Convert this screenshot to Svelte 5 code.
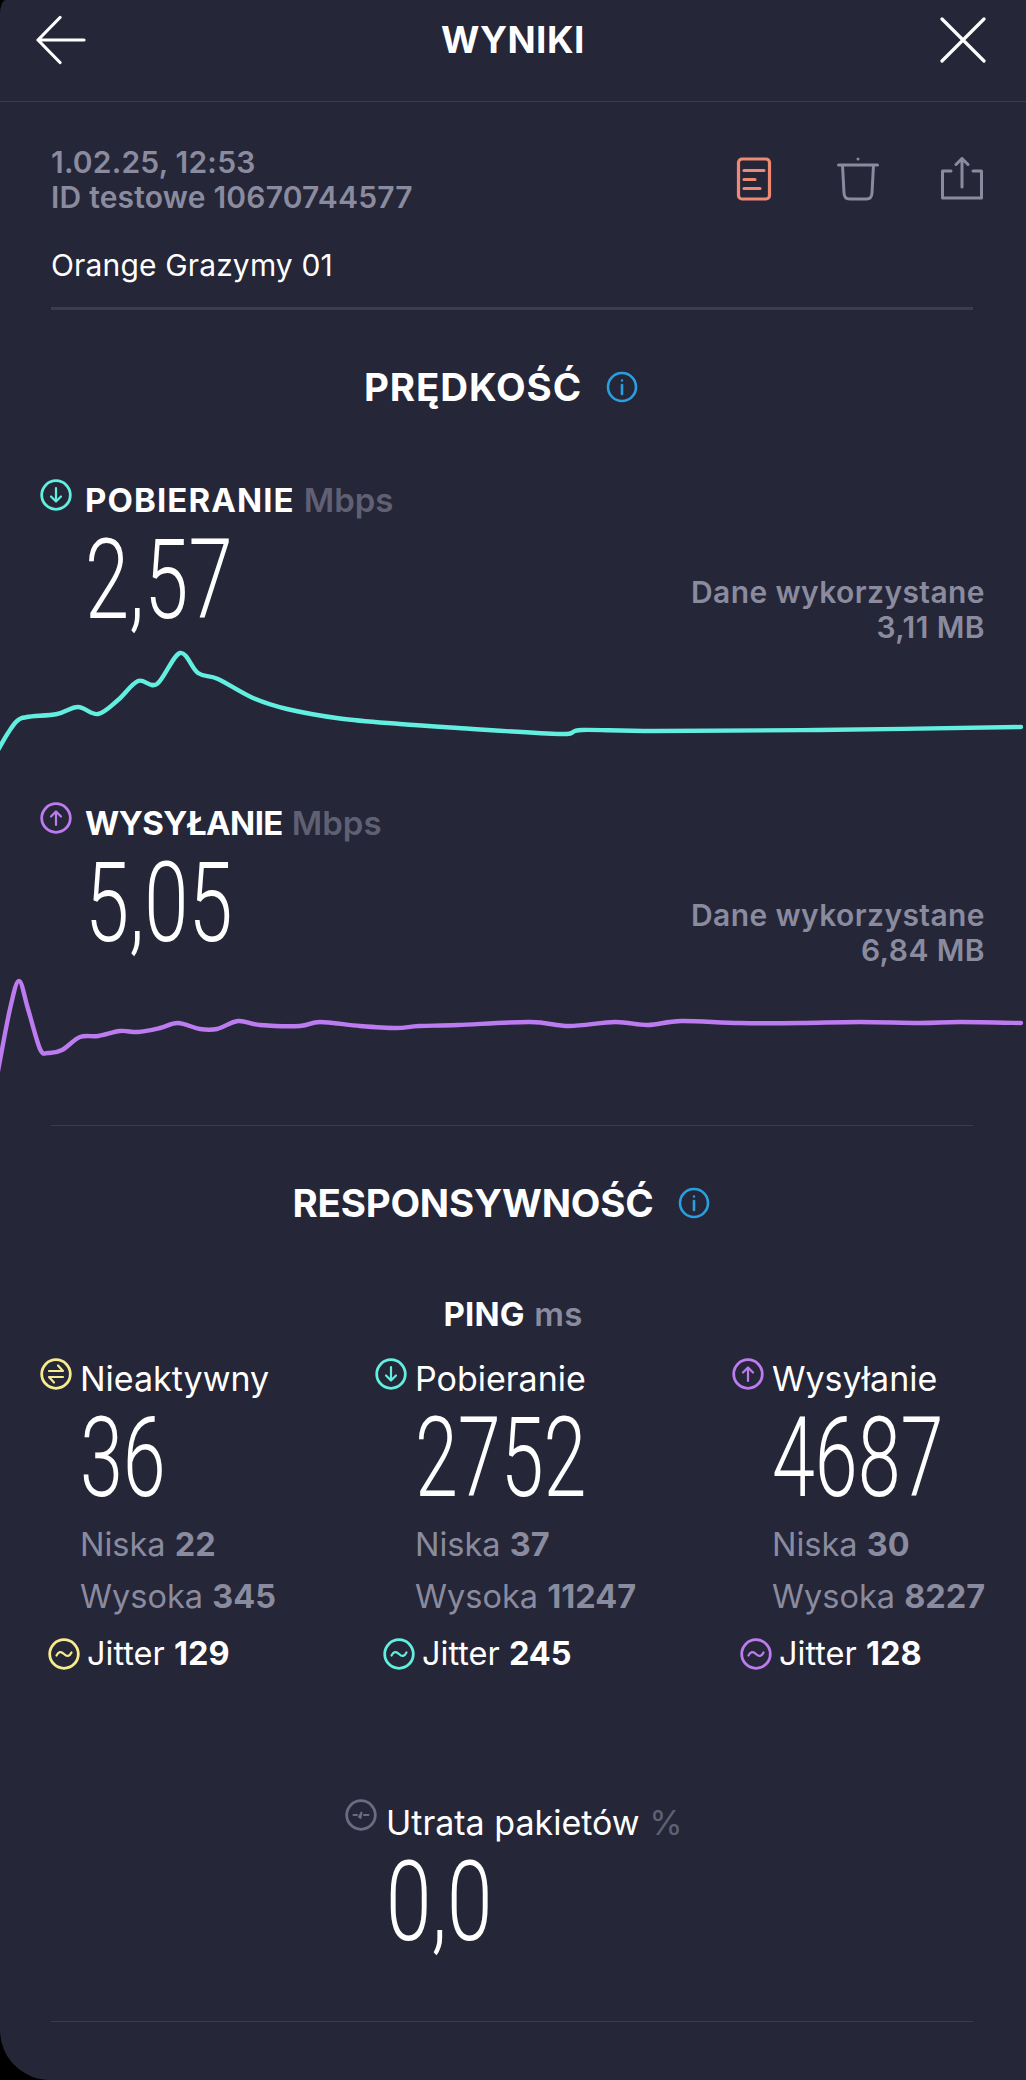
<script>
  const downPts = [[-2,749],[8,732],[17,720],[27,716],[57,713],[78,706],[98,713],[118,699],[138,680],[157,683],[180,652],[198,672],[218,678],[253,697],[287,708],[340,717.5],[400,723],[458,727],[560,733],[582,729],[654,730],[818,729],[1021,726]];
  const upPts = [[-2,1072],[10,1010],[19,982],[28,1010],[40,1050],[48,1054],[62,1051],[80,1038],[98,1037],[120,1032],[138,1033],[160,1029],[178,1024],[200,1030],[217,1030],[238,1022],[260,1026],[300,1027],[320,1023],[360,1027],[396,1029],[419,1027],[458,1026],[530,1023],[569,1027],[615,1023],[648,1026],[681,1022],[740,1024],[800,1024],[860,1023],[920,1024],[960,1023],[1021,1024]];

  // catmull-rom through the sampled points
  function smooth(pts, top) {
    let d = `M${pts[0][0]} ${pts[0][1] - top}`;
    for (let i = 0; i < pts.length - 1; i++) {
      const p0 = pts[i - 1] || pts[i], p1 = pts[i], p2 = pts[i + 1], p3 = pts[i + 2] || p2;
      const c1x = p1[0] + (p2[0] - p0[0]) / 6, c1y = p1[1] + (p2[1] - p0[1]) / 6;
      const c2x = p2[0] - (p3[0] - p1[0]) / 6, c2y = p2[1] - (p3[1] - p1[1]) / 6;
      d += `C${c1x.toFixed(1)} ${(c1y - top).toFixed(1)} ${c2x.toFixed(1)} ${(c2y - top).toFixed(1)} ${p2[0]} ${p2[1] - top}`;
    }
    return d;
  }

  const speeds = [
    { name: 'POBIERANIE', value: '2,57', used: '3,11 MB', color: '#62efe0', dir: 'down', path: smooth(downPts, 637) },
    { name: 'WYSYŁANIE', value: '5,05', used: '6,84 MB', color: '#bd7bf0', dir: 'up', tight: true, path: smooth(upPts, 962) }
  ];
  const pings = [
    { name: 'Nieaktywny', value: '36', low: 22, high: 345, jitter: 129, color: '#f6ec8e', dir: 'idle' },
    { name: 'Pobieranie', value: '2752', low: 37, high: 11247, jitter: 245, color: '#62efe0', dir: 'down' },
    { name: 'Wysyłanie', value: '4687', low: 30, high: 8227, jitter: 128, color: '#bd7bf0', dir: 'up' }
  ];
</script>

{#snippet badge(color, dir)}
  <svg class="badge" width="32" height="32" viewBox="0 0 32 32" fill="none" stroke={color} stroke-width="2.8" stroke-linecap="round" stroke-linejoin="round">
    <circle cx="16" cy="16" r="14.3" />
    {#if dir === 'down'}
      <path d="M16 9v13M11 17.500l5 5 5-5" stroke-width="2.200" />
    {:else if dir === 'up'}
      <path d="M16 23v-13M11 14.500l5-5 5 5" stroke-width="2.200" />
    {:else if dir === 'idle'}
      <path d="M9 13h14l-5-5.500M23 19H9l5 5.500" stroke-width="2.200" />
    {:else if dir === 'wave'}
      <path d="M8.500 17.500c2-4 4.500-4.500 7.500-1.500s5.500 2.500 7.500-1.500" stroke-width="2.200" />
    {:else}
      <path d="M8.500 16h3.500M14 18l2.500-4.500-1 5.500M19 16h4.500" stroke-width="2" />
    {/if}
  </svg>
{/snippet}

{#snippet info()}
  <svg class="info" width="32" height="32" viewBox="0 0 32 32" fill="none" stroke="#2a9fe0" stroke-width="2.600">
    <circle cx="16" cy="16" r="14" />
    <path d="M16 14v9" stroke-linecap="round" />
    <circle cx="16" cy="9.500" r="1.200" fill="#2a9fe0" stroke="none" />
  </svg>
{/snippet}

<div class="screen">
  <header>
    <svg width="50" height="50" viewBox="0 0 50 50" fill="none" stroke="#fff" stroke-width="3.200" stroke-linecap="round" stroke-linejoin="round">
      <path d="M2 25h46M24 2.500L2 25l22 22.500" />
    </svg>
    <h1>WYNIKI</h1>
    <svg width="46" height="46" viewBox="0 0 46 46" fill="none" stroke="#fff" stroke-width="3.200" stroke-linecap="round">
      <path d="M2 2l42 42M44 2L2 44" />
    </svg>
  </header>

  <section class="meta">
    <div class="meta-top">
      <div class="stamp">
        <div>1.02.25, 12:53</div>
        <div>ID testowe 10670744577</div>
      </div>
      <div class="actions">
        <svg width="44" height="44" viewBox="0 0 44 44" fill="none" stroke="#ee8a74" stroke-width="3.200" stroke-linecap="round" stroke-linejoin="round">
          <rect x="6.500" y="2" width="31" height="40" rx="3.500" />
          <path d="M12 13.500h20M12 22.500h11M12 31.500h16" />
        </svg>
        <svg width="44" height="44" viewBox="0 0 44 44" fill="none" stroke="#8a8b9e" stroke-width="3" stroke-linecap="round" stroke-linejoin="round">
          <path d="M2.500 8h39M22 2h.01M6.500 8l1.500 28c.2 3.500 2 6 5.500 6h17c3.500 0 5.300-2.500 5.500-6l1.500-28" />
        </svg>
        <svg width="44" height="44" viewBox="0 0 44 44" fill="none" stroke="#8a8b9e" stroke-width="3" stroke-linecap="round" stroke-linejoin="round">
          <path d="M11 14H2.500v27h39V14H33M22 30V1.500M16 7.500l6-6 6 6" />
        </svg>
      </div>
    </div>
    <div class="network">Orange Grazymy 01</div>
    <div class="rule thick"></div>
  </section>

  <h2 class="speed-title">PRĘDKOŚĆ {@render info()}</h2>

  {#each speeds as s}
    <section class="speed">
      <div class="speed-head">
        <div class="speed-left">
          <div class="speed-name">
            {@render badge(s.color, s.dir)}
            <span class="strong" class:tight={s.tight}>{s.name}</span>
            <span class="unit">Mbps</span>
          </div>
          <div class="big speed-value"><span>{s.value}</span></div>
        </div>
        <div class="used">
          <div>Dane wykorzystane</div>
          <div>{s.used}</div>
        </div>
      </div>
      <svg class="chart" width="1026" height="120" viewBox="0 0 1026 120" fill="none">
        <path d={s.path} stroke={s.color} stroke-width="4.400" stroke-linecap="round" stroke-linejoin="round" />
      </svg>
    </section>
  {/each}

  <div class="rule"></div>

  <h2 class="resp-title">RESPONSYWNOŚĆ {@render info()}</h2>

  <div class="ping-title"><span class="strong">PING</span> <span class="ms">ms</span></div>

  <div class="pings">
    {#each pings as p}
      <div class="ping">
        <div class="ping-name">{@render badge(p.color, p.dir)}<span>{p.name}</span></div>
        <div class="big ping-value"><span>{p.value}</span></div>
        <div class="range">Niska <b>{p.low}</b></div>
        <div class="range">Wysoka <b>{p.high}</b></div>
        <div class="jitter">{@render badge(p.color, 'wave')}<span>Jitter <b>{p.jitter}</b></span></div>
      </div>
    {/each}
  </div>

  <div class="loss">
    <div>
      <div class="loss-name">{@render badge('#6b6c80', 'loss')}<span>Utrata pakietów <i>%</i></span></div>
      <div class="big loss-value"><span>0,0</span></div>
    </div>
  </div>

  <div class="rule"></div>
</div>

<style>
:global(body) {
  margin: 0;
  background: #000;
}
.screen {
  width: 1026px;
  height: 2080px;
  overflow: hidden;
  background: #252638;
  color: #fff;
  font-family: Inter, "Liberation Sans", sans-serif;
  border-top-left-radius: 6px 14px;
  border-bottom-left-radius: 50px;
}
header {
  height: 102px;
  box-sizing: border-box;
  border-bottom: 1px solid #3a3c50;
  padding: 15px 40px 0 36px;
  display: flex;
  justify-content: space-between;
  align-items: flex-start;
}
header svg:last-child {
  margin-top: 2px;
}
h1 {
  margin: 5px 0 0 0;
  font-size: 37px;
  line-height: 40px;
  font-weight: 700;
  letter-spacing: 0.5px;
}
.meta {
  padding: 0 42px 0 51px;
}
.meta-top {
  display: flex;
  justify-content: space-between;
  align-items: flex-start;
  padding-top: 42px;
}
.stamp {
  margin-top: 1px;
  color: #8a8b9e;
  font-size: 30px;
  line-height: 35px;
  letter-spacing: 0.2px;
  font-weight: 600;
}
.actions {
  display: flex;
  gap: 60px;
  margin-top: 13px;
}
.network {
  margin-top: 32px;
  font-size: 30px;
  line-height: 36px;
  letter-spacing: 0.15px;
}
.rule {
  height: 1px;
  margin: 0 53px 0 51px;
  background: #3a3c50;
}
.rule.thick {
  height: 3px;
  margin: 24px 11px 0 0;
}
h2 {
  margin: 0;
  display: flex;
  justify-content: center;
  align-items: center;
  gap: 24px;
  padding-right: 24px;
  font-size: 38.5px;
  line-height: 44px;
  font-weight: 700;
}
.speed-title {
  margin-top: 55px;
  letter-spacing: 0.9px;
}
.speed {
  height: 323px;
}
.speed-title + .speed {
  margin-top: 70px;
}
.speed-head {
  display: flex;
  justify-content: space-between;
  align-items: flex-end;
  padding: 0 41px 0 40px;
  height: 159px;
}
.speed-left {
  align-self: flex-start;
}
.speed-name {
  display: flex;
  align-items: flex-start;
  font-size: 33px;
  line-height: 36px;
}
.badge {
  flex: none;
}
.speed-name .strong {
  margin: 3px 0 0 13px;
  font-weight: 700;
  letter-spacing: 1.1px;
}
.speed-name .strong.tight {
  letter-spacing: -0.6px;
}
.speed-name .unit {
  margin: 3px 0 0 9px;
  color: #5f6074;
  font-weight: 600;
}
.big span {
  display: inline-block;
  transform: scaleX(0.69);
  transform-origin: left center;
  font-family: Roboto, sans-serif;
  font-weight: 300;
}
.speed-value {
  margin: 3px 0 0 45px;
  font-size: 112px;
  line-height: 112px;
}
.speed-value span {
  transform: scaleX(0.71);
}
.used {
  text-align: right;
  color: #8a8b9e;
  font-size: 30px;
  line-height: 35px;
  letter-spacing: 0.4px;
  font-weight: 600;
  margin-bottom: -7px;
}
.chart {
  display: block;
}
.resp-title {
  margin-top: 55px;
  letter-spacing: -0.2px;
}
.ping-title {
  margin-top: 71px;
  text-align: center;
  font-size: 33px;
  line-height: 36px;
  letter-spacing: 0.2px;
}
.ping-title .strong {
  font-weight: 700;
}
.ping-title .ms {
  color: #8a8b9e;
  font-weight: 600;
}
.pings {
  display: grid;
  grid-template-columns: 335px 357px 1fr;
  padding-left: 40px;
  margin-top: 26px;
}
.ping-name {
  display: flex;
  gap: 8px;
  font-size: 34px;
  line-height: 36px;
}
.ping-name span {
  margin-top: 3px;
}
.ping-value {
  margin-left: 40px;
  font-size: 112px;
  line-height: 112px;
  margin-top: 2px;
}
.range {
  margin-left: 40px;
  color: #8a8b9e;
  font-size: 32.5px;
  line-height: 52px;
}
.range b {
  font-weight: 700;
}
.ping-value + .range {
  margin-top: 5px;
}
.jitter {
  display: flex;
  align-items: center;
  gap: 7px;
  margin: 13px 0 0 8px;
  font-size: 32.5px;
  line-height: 36px;
}
.jitter b {
  font-weight: 700;
}
.loss {
  display: flex;
  padding-left: 345px;
  margin-top: 127px;
  height: 222px;
}
.loss-name {
  display: flex;
  gap: 9px;
  font-size: 34px;
  line-height: 36px;
}
.loss-name span {
  margin-top: 6px;
}
.loss-name i {
  font-style: normal;
  color: #5f6074;
}
.loss-value {
  margin: 2px 0 0 41px;
  font-size: 112px;
  line-height: 112px;
}
.loss-value span {
  transform: scaleX(0.73);
}
</style>
